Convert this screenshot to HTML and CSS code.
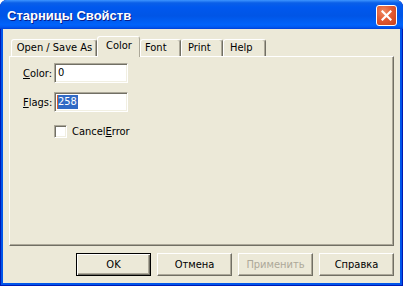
FILE: index.html
```html
<!DOCTYPE html>
<html lang="ru">
  <head>
    <meta charset="UTF-8" />
    <meta name="viewport" content="width=device-width, initial-scale=1.0" />
    <title>Старницы Свойств</title>
    <link rel="stylesheet" href="styles.css">
  </head>
  <body>
    <div class="window">
      <div class="titlebar">
        <span class="title">Старницы Свойств</span>
        <button class="close" type="button" aria-label="Close">
          <svg width="11" height="11" viewBox="0 0 11 11">
            <path d="M1.5 1.5 L9.5 9.5 M9.5 1.5 L1.5 9.5" stroke="#fff" stroke-width="2.2" stroke-linecap="square" />
          </svg>
        </button>
      </div>
      <div class="client">
        <div class="tabs">
          <div class="tab tab-open">Open / Save As</div>
          <div class="tab tab-color active">Color</div>
          <div class="tab tab-font">Font</div>
          <div class="tab tab-print">Print</div>
          <div class="tab tab-help">Help</div>
        </div>
        <div class="panel">
          <div class="row">
            <label class="lbl"><u>C</u>olor:</label>
            <div class="field">0</div>
          </div>
          <div class="row">
            <label class="lbl"><u>F</u>lags:</label>
            <div class="field"><span class="sel">258</span></div>
          </div>
          <div class="check-row">
            <span class="checkbox"></span>
            <span>Cancel<u>E</u>rror</span>
          </div>
        </div>
        <div class="buttons">
          <button class="btn default" type="button">OK</button>
          <button class="btn" type="button">Отмена</button>
          <button class="btn" type="button" disabled>Применить</button>
          <button class="btn" type="button">Справка</button>
        </div>
      </div>
    </div>
  </body>
</html>
```

FILE: styles.css
```css
html, body {
  margin: 0;
  padding: 0;
  background: #fff;
}

body {
  width: 403px;
  height: 286px;
  overflow: hidden;
  font-family: "DejaVu Sans Condensed", "Liberation Sans", Arial, sans-serif;
  font-stretch: condensed;
  font-size: 11px;
  color: #000;
}

.window {
  width: 403px;
  height: 286px;
  box-sizing: border-box;
  display: flex;
  flex-direction: column;
  background: #0055ea;
  border-radius: 7px 7px 0 0;
  box-shadow: inset 1px 0 #0019b4, inset -1px 0 #0019b4, inset 0 -1px #0019b4;
  overflow: hidden;
}

/* title bar */

.titlebar {
  height: 29px;
  display: flex;
  align-items: flex-start;
  padding: 0 6px 0 7px;
  box-sizing: border-box;
  background: linear-gradient(180deg, #3d95ff 0%, #0a5fe8 10%, #0058ee 25%, #0055e6 55%, #0063fb 85%, #005af2 93%, #0040d8 100%);
}

.title {
  margin-top: 8px;
  color: #fff;
  font-family: "Liberation Sans", Arial, sans-serif;
  font-stretch: normal;
  font-weight: bold;
  font-size: 13px;
  text-shadow: 1px 1px #0a1e8c;
}

.close {
  margin: 5px 0 0 auto;
  width: 21px;
  height: 21px;
  padding: 0;
  box-sizing: border-box;
  border: 1px solid #fff;
  border-radius: 3px;
  background: radial-gradient(circle at 35% 30%, #f08b62 0%, #e25a33 45%, #c8401a 100%);
  display: flex;
  align-items: center;
  justify-content: center;
}

.close svg {
  display: block;
}

/* client area */

.client {
  flex: 1;
  margin: 0 3px 3px;
  background: #ece9d8;
  padding: 7px 6px 0;
  display: flex;
  flex-direction: column;
}

.tabs {
  height: 20px;
  display: flex;
  align-items: flex-end;
  padding-left: 2px;
  position: relative;
  z-index: 1;
}

.tab {
  height: 17px;
  box-sizing: border-box;
  border: 1px solid #fff;
  border-right: 1px solid #716f64;
  border-bottom: none;
  border-radius: 3px 3px 0 0;
  box-shadow: inset -1px 0 #aca899;
  background: #ece9d8;
  text-align: center;
  line-height: 16px;
  padding-left: 1px;
  white-space: nowrap;
}

.tab.active {
  height: 21px;
  margin-bottom: -1px;
  line-height: 17px;
  box-shadow: none;
  border-right-color: #aca899;
}

.tab-open { width: 86px; }
.tab-color { width: 43px; }
.tab-font { width: 41px; text-align: left; padding-left: 4px; }
.tab-print { width: 42px; text-align: left; padding-left: 6px; }
.tab-help { width: 43px; text-align: left; padding-left: 6px; }

.panel {
  height: 190px;
  box-sizing: border-box;
  border: 1px solid;
  border-color: #fff #716f64 #716f64 #fff;
  box-shadow: inset -1px -1px #aca899;
  padding: 6px 0 0 13px;
}

.row {
  display: flex;
  align-items: center;
  height: 20px;
  margin-bottom: 9px;
}

.lbl {
  width: 31px;
}

.field {
  width: 74px;
  height: 20px;
  box-sizing: border-box;
  border: 1px solid;
  border-color: #aca899 #fff #fff #aca899;
  box-shadow: inset 1px 1px #716f64, inset -1px -1px #f1efe2;
  background: #fff;
  padding: 0 0 0 3px;
  line-height: 18px;
}

.sel {
  display: inline-block;
  background: #316ac5;
  color: #fff;
  line-height: 14px;
  border-left: 1px solid #e0602c;
  margin-left: -1px;
  padding-right: 1px;
}

.check-row {
  display: flex;
  align-items: center;
  margin: 13px 0 0 31px;
  height: 13px;
}

.checkbox {
  width: 13px;
  height: 13px;
  box-sizing: border-box;
  border: 1px solid;
  border-color: #aca899 #fff #fff #aca899;
  box-shadow: inset 1px 1px #716f64, inset -1px -1px #f1efe2;
  background: #fff;
  margin-right: 5px;
}

/* bottom buttons */

.buttons {
  display: flex;
  justify-content: flex-end;
  gap: 6px;
  margin-top: 7px;
}

.btn {
  width: 75px;
  height: 23px;
  box-sizing: border-box;
  padding: 0;
  font-family: inherit;
  font-stretch: inherit;
  font-size: 11px;
  color: #000;
  background: #ece9d8;
  border: 1px solid;
  border-color: #fff #716f64 #716f64 #fff;
  box-shadow: inset -1px -1px #aca899;
}

.btn.default {
  border-color: #000;
  box-shadow: inset 1px 1px #fff, inset -1px -1px #716f64, inset -2px -2px #aca899;
}

.btn:disabled {
  color: #aca899;
}
```
